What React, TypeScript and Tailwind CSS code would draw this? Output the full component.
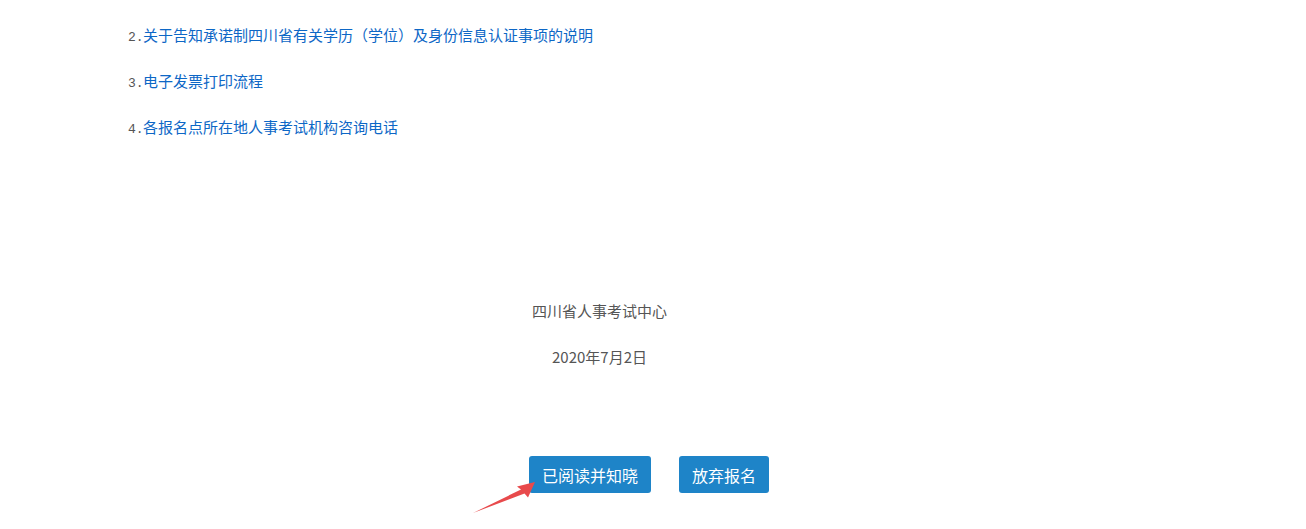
import React from "react";

const links = [
  { n: "2.", t: "关于告知承诺制四川省有关学历（学位）及身份信息认证事项的说明" },
  { n: "3.", t: "电子发票打印流程" },
  { n: "4.", t: "各报名点所在地人事考试机构咨询电话" },
];

export default function App() {
  return (
    <div
      className="relative h-[529px] w-[1306px] overflow-hidden bg-white"
      style={{ fontFamily: '"Noto Sans CJK SC", "Noto Sans", sans-serif' }}
    >
      <div className="flex flex-col pt-[12px] pl-[128px]">
        {links.map((l) => (
          <p key={l.n} className="h-[46px] text-[15px] leading-[46px]">
            <span className="inline-block w-[15px] font-['Liberation_Mono',monospace] text-[13px] text-[#555555]">
              {l.n}
            </span>
            <a className="text-[#0d67c6] no-underline">{l.t}</a>
          </p>
        ))}
      </div>
      <div className="mt-[138px] ml-[128px] flex w-[943px] flex-col items-center text-[15px] text-[#555555]">
        <p className="h-[46px] leading-[46px]">四川省人事考试中心</p>
        <p className="h-[46px] leading-[46px]">2020年7月2日</p>
      </div>
      <div className="mt-[76px] ml-[529px] flex gap-[28px]">
        <button className="h-[37px] rounded-[3px] bg-[#1e84c8] px-[13px] text-[16px] text-white">
          已阅读并知晓
        </button>
        <button className="h-[37px] rounded-[3px] bg-[#1e84c8] px-[13px] text-[16px] text-white">
          放弃报名
        </button>
      </div>
      <svg
        className="pointer-events-none absolute left-0 top-0"
        width="1306"
        height="529"
        viewBox="0 0 1306 529"
      >
        <polygon
          points="473,513 521,489.5 517,486.5 535,482 528,497.5 524.5,493.5"
          fill="#e84a4c"
        />
      </svg>
    </div>
  );
}
